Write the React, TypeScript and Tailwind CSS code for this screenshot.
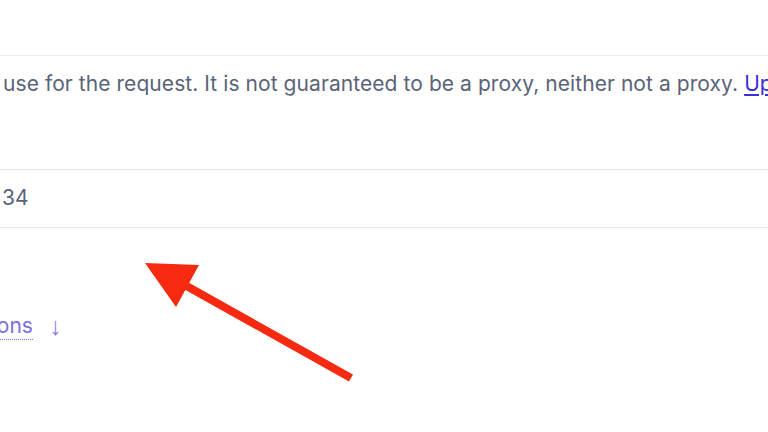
import React from 'react';

const Arrow: React.FC = () => (
  <svg
    className="absolute left-0 top-0 pointer-events-none"
    width={768}
    height={432}
    viewBox="0 0 768 432"
  >
    <line x1={183} y1={284} x2={351} y2={378} stroke="#f62a10" strokeWidth={8} />
    <polygon points="145,263 199,265 176,307" fill="#f62a10" />
  </svg>
);

export default function App() {
  return (
    <div className="relative h-[432px] w-[768px] overflow-hidden bg-white font-['Inter',sans-serif] text-[21px] text-[#5a6478]">
      <div className="h-[55px]" />
      <div className="h-[114px] border-t border-[#ececf0] pl-[3px] pt-[12px] leading-[32px] tracking-[0.07px] whitespace-nowrap">
        use for the request. It is not guaranteed to be a proxy, neither not a proxy.{' '}
        <a className="text-[#3b2ed6] underline underline-offset-[3px]">Upgrade</a>
      </div>
      <div className="h-[58px] border-t border-[#e0e0f6] pl-[2px] pt-[12px] leading-[32px]">34</div>
      <div className="border-t border-[#e5e7eb]" />
      <div className="h-[32px] mt-[82px] flex items-center whitespace-nowrap leading-[32px]">
        <span className="-ml-[28px] text-[#7a6ee0] border-b border-dotted border-[#7a6ee0] leading-[26px]">
          ptions
        </span>
        <span className="ml-[16px] font-['Liberation_Sans',sans-serif] text-[25px] leading-[26px] text-[#8a80e8]">↓</span>
      </div>
      <Arrow />
    </div>
  );
}
